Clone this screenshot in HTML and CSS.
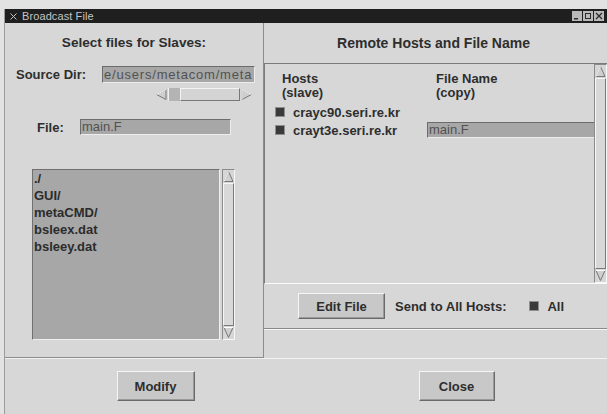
FILE: index.html
```html
<!DOCTYPE html>
<html>
<head>
<meta charset="utf-8">
<title>Broadcast File</title>
<link rel="stylesheet" href="styles.css">
</head>
<body>
<div class="window">
  <div class="titlebar">
    <span class="title">
      <svg class="title-x" width="7" height="7" viewBox="0 0 7 7"><path d="M0.5 0.5L6.5 6.5M6.5 0.5L0.5 6.5" stroke="#c4c4c4" stroke-width="1"/></svg>
      Broadcast File
    </span>
    <span class="controls">
      <span class="ctl"><svg width="8" height="8" viewBox="0 0 8 8"><rect x="1" y="6" width="4" height="1.5" fill="#2a2a2a"/></svg></span>
      <span class="ctl"><svg width="8" height="8" viewBox="0 0 8 8"><rect x="1.5" y="1.5" width="5" height="5" fill="none" stroke="#2a2a2a" stroke-width="1"/></svg></span>
      <span class="ctl"><svg width="8" height="8" viewBox="0 0 8 8"><path d="M1 1L7 7M7 1L1 7" stroke="#2a2a2a" stroke-width="1.3"/></svg></span>
    </span>
  </div>

  <div class="main">
    <section class="pane pane-left">
      <h2 class="heading">Select files for Slaves:</h2>

      <div class="field field-src">
        <label class="field-label">Source Dir:</label>
        <div class="entry entry-src">e/users/metacom/meta</div>
      </div>

      <div class="hscroll">
        <svg class="arrow" width="13" height="13" viewBox="0 0 13 13"><polygon points="11,1.5 11,11.5 1.5,6.5" fill="#cfcfcf" stroke="#777" stroke-width="1"/><path d="M11 1.5L1.5 6.5" stroke="#fff" stroke-width="1"/></svg>
        <span class="hthumb"></span>
        <span class="htrough"></span>
        <svg class="arrow" width="13" height="13" viewBox="0 0 13 13"><polygon points="2,1.5 2,11.5 11.5,6.5" fill="#cfcfcf" stroke="#777" stroke-width="1"/><path d="M2 11.5L2 1.5L11.5 6.5" fill="none" stroke="#fff" stroke-width="1"/></svg>
      </div>

      <div class="field field-file">
        <label class="field-label">File:</label>
        <div class="entry entry-file">main.F</div>
      </div>

      <div class="listwrap">
        <ul class="filelist">
          <li>./</li>
          <li>GUI/</li>
          <li>metaCMD/</li>
          <li>bsleex.dat</li>
          <li>bsleey.dat</li>
        </ul>
        <div class="vscroll">
          <svg class="varrow" width="11" height="13" viewBox="0 0 11 13"><polygon points="5.5,1.5 10,11.5 1,11.5" fill="#cfcfcf" stroke="#777" stroke-width="1"/><path d="M1 11.5L5.5 1.5" stroke="#fff" stroke-width="1"/></svg>
          <span class="vtrough"></span>
          <svg class="varrow" width="11" height="13" viewBox="0 0 11 13"><polygon points="1,1.5 10,1.5 5.5,11.5" fill="#cfcfcf" stroke="#777" stroke-width="1"/><path d="M1 1.5L10 1.5" stroke="#fff" stroke-width="1"/></svg>
        </div>
      </div>
    </section>

    <section class="pane pane-right">
      <h2 class="heading">Remote Hosts and File Name</h2>

      <div class="hostbox">
        <div class="hostgrid">
          <div class="colhead colhead-host">Hosts<br>(slave)</div>
          <div class="colhead colhead-file">File Name<br>(copy)</div>

          <div class="host"><span class="check"></span>crayc90.seri.re.kr</div>
          <div class="copy"></div>

          <div class="host"><span class="check"></span>crayt3e.seri.re.kr</div>
          <div class="copy"><div class="entry entry-copy">main.F</div></div>
        </div>
        <div class="vscroll vscroll-hosts">
          <svg class="varrow" width="11" height="13" viewBox="0 0 11 13"><polygon points="5.5,1.5 10,11.5 1,11.5" fill="#cfcfcf" stroke="#777" stroke-width="1"/><path d="M1 11.5L5.5 1.5" stroke="#fff" stroke-width="1"/></svg>
          <span class="vtrough"></span>
          <svg class="varrow" width="11" height="13" viewBox="0 0 11 13"><polygon points="1,1.5 10,1.5 5.5,11.5" fill="#cfcfcf" stroke="#777" stroke-width="1"/><path d="M1 1.5L10 1.5" stroke="#fff" stroke-width="1"/></svg>
        </div>
      </div>

      <div class="actions">
        <button class="btn btn-edit">Edit File</button>
        <span class="send-label">Send to All Hosts:</span>
        <span class="check check-all"></span>
        <span class="all-label">All</span>
      </div>

      <div class="rule"></div>
    </section>
  </div>

  <div class="footer">
    <div class="footer-cell"><button class="btn btn-modify">Modify</button></div>
    <div class="footer-cell"><button class="btn btn-close">Close</button></div>
  </div>
</div>
</body>
</html>
```

FILE: styles.css
```css
html, body {
  margin: 0;
  padding: 0;
}

body {
  width: 607px;
  height: 414px;
  overflow: hidden;
  background: #e2e2e2;
  font-family: "Liberation Sans", Arial, sans-serif;
  color: #2e2e2e;
}

.window {
  box-sizing: border-box;
  height: 414px;
  margin-top: 9px;
  margin-left: 4px;
  border-left: 1px solid #9c9c9c;
  background: #d7d7d7;
}

/* ---- title bar ---- */
.titlebar {
  height: 14px;
  background: #1f1f1f;
  display: flex;
  align-items: center;
  justify-content: space-between;
}

.title {
  display: flex;
  align-items: center;
  gap: 5px;
  padding-left: 5px;
  font-size: 11px;
  color: #c4c4c4;
  letter-spacing: 0.1px;
}

.controls {
  display: flex;
  gap: 1px;
  padding-right: 3px;
}

.ctl {
  width: 10px;
  height: 10px;
  background: #b9b9b9;
  display: flex;
  align-items: center;
  justify-content: center;
}

/* ---- main area ---- */
.main {
  display: grid;
  grid-template-columns: 259px 1fr;
  height: 335px;
  border-bottom: 1px solid #f3f3f3;
}

.pane {
  box-sizing: border-box;
  height: 335px;
}

.pane-left {
  border-right: 1px solid #8c8c8c;
  border-bottom: 1px solid #8c8c8c;
}

.heading {
  margin: 12px 0 0;
  font-size: 13.6px;
  line-height: 16px;
  font-weight: bold;
  text-align: center;
  color: #2e2e2e;
}

.pane-right .heading {
  font-size: 14px;
  padding-right: 4px;
}

.field {
  display: flex;
  align-items: center;
}

.field-label {
  font-size: 13px;
  font-weight: bold;
}

.field-src {
  margin-top: 15px;
  padding-left: 11px;
}

.field-src .field-label {
  width: 86px;
}

.field-file {
  margin-top: 18px;
  padding-left: 32px;
}

.field-file .field-label {
  width: 43px;
}

.entry {
  box-sizing: border-box;
  background: #a7a7a7;
  border: 1px solid;
  border-color: #6c6c6c #ececec #ececec #6c6c6c;
  font-size: 13px;
  color: #525252;
  padding-left: 1px;
  white-space: nowrap;
  overflow: hidden;
}

.entry-src {
  width: 153px;
  height: 17px;
  line-height: 15px;
  letter-spacing: 0.8px;
}

.entry-file {
  width: 151px;
  height: 16px;
  line-height: 14px;
}

/* horizontal scrollbar under the source entry */
.hscroll {
  margin: 5px 0 0 150px;
  width: 98px;
  height: 13px;
  display: flex;
}

.hthumb {
  width: 12px;
  background: #b4b4b4;
  border-left: 1px solid #f0f0f0;
  box-sizing: border-box;
}

.htrough {
  flex: 1;
  box-sizing: border-box;
  border: 1px solid;
  border-color: #f4f4f4 #777 #777 #f4f4f4;
  background: #d4d4d4;
}

/* file list */
.listwrap {
  margin: 34px 0 0 27px;
  display: flex;
  gap: 2px;
  height: 171px;
}

.filelist {
  box-sizing: border-box;
  width: 188px;
  height: 171px;
  margin: 0;
  padding: 0 0 0 1px;
  list-style: none;
  background: #a7a7a7;
  border: 1px solid;
  border-color: #707070 #efefef #efefef #707070;
  font-size: 13px;
  font-weight: bold;
  line-height: 17px;
  color: #2c2c2c;
}

.vscroll {
  box-sizing: border-box;
  width: 13px;
  display: flex;
  flex-direction: column;
  background: #d6d6d6;
  border: 1px solid;
  border-color: #8a8a8a #f6f6f6 #f6f6f6 #8a8a8a;
}

.varrow {
  flex: none;
  display: block;
}

.vtrough {
  flex: 1;
  box-sizing: border-box;
  border: 1px solid;
  border-color: #f6f6f6 #7a7a7a #7a7a7a #f6f6f6;
  background: #d8d8d8;
}

/* ---- right pane ---- */
.hostbox {
  box-sizing: border-box;
  margin-top: 12px;
  height: 221px;
  display: flex;
  border-top: 1px solid #7a7a7a;
  border-left: 1px solid #7a7a7a;
  border-bottom: 1px solid #fbfbfb;
}

.hostgrid {
  flex: 1;
  display: grid;
  grid-template-columns: 162px 1fr;
  grid-auto-rows: min-content;
  row-gap: 2px;
  padding-top: 8px;
  align-content: start;
}

.colhead {
  font-size: 13px;
  font-weight: bold;
  line-height: 14px;
  margin-bottom: 2px;
}

.colhead-host {
  padding-left: 17px;
}

.colhead-file {
  padding-left: 9px;
}

.host {
  display: flex;
  align-items: center;
  height: 16px;
  padding-left: 11px;
  font-size: 13px;
  font-weight: bold;
}

.check {
  display: inline-block;
  width: 8px;
  height: 8px;
  background: #3a3a3a;
  box-shadow: 0 0 0 1px #8e8e8e;
  margin-right: 9px;
  flex: none;
}

.copy {
  height: 16px;
}

.entry-copy {
  height: 16px;
  line-height: 14px;
  border-right: none;
}

.vscroll-hosts {
  width: 13px;
}

.actions {
  display: flex;
  align-items: center;
  margin: 9px 0 0 34px;
  font-size: 13px;
  font-weight: bold;
}

.btn {
  box-sizing: border-box;
  background: #c8c8c8;
  border: 1px solid;
  border-color: #f6f6f6 #6a6a6a #6a6a6a #f6f6f6;
  box-shadow: inset -1px -1px 0 #9a9a9a;
  font-family: "Liberation Sans", Arial, sans-serif;
  font-size: 13px;
  font-weight: bold;
  color: #2e2e2e;
  padding: 0;
}

.btn-edit {
  width: 87px;
  height: 26px;
}

.send-label {
  margin-left: 10px;
}

.check-all {
  margin: 0 0 0 24px;
}

.all-label {
  margin-left: 9px;
}

.rule {
  margin-top: 9px;
  height: 0;
  border-top: 1px solid #8a8a8a;
  border-bottom: 1px solid #f6f6f6;
}

/* ---- footer ---- */
.footer {
  display: grid;
  grid-template-columns: 1fr 1fr;
  padding-top: 12px;
}

.footer-cell {
  display: flex;
  justify-content: center;
}

.btn-modify {
  width: 78px;
  height: 30px;
}

.btn-close {
  width: 76px;
  height: 30px;
}
```
